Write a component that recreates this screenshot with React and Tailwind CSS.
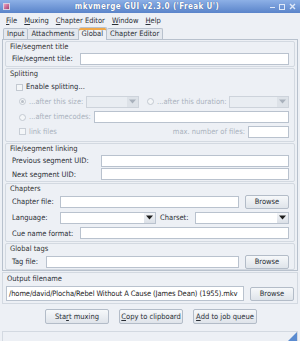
import React from "react";

const Input = ({ w, children, className = "" }) => (
  <div
    className={`h-[12px] bg-white border border-[#b9c2ce] flex items-center px-[2px] text-[#222] overflow-hidden whitespace-nowrap ${className}`}
    style={w ? { width: w } : undefined}
  >
    {children}
  </div>
);

const Btn = ({ children, className = "" }) => (
  <div
    className={`h-[14px] shrink-0 whitespace-nowrap flex items-center justify-center border border-[#b3bcc8] rounded-[2px] bg-gradient-to-b from-[#f6f8fa] to-[#dfe4ea] text-[#2a2f36] ${className}`}
  >
    {children}
  </div>
);

const Combo = ({ disabled, className = "" }) => (
  <div
    className={`h-[12px] flex border ${
      disabled ? "border-[#cdd3db] bg-[#e9edf2]" : "border-[#b9c2ce] bg-white"
    } ${className}`}
  >
    <div className="flex-1" />
    <div
      className={`w-[11px] flex items-center justify-center ${
        disabled ? "bg-[#dde2e8]" : "bg-gradient-to-b from-[#f3f5f8] to-[#dbe0e7]"
      }`}
    >
      <svg width="7" height="5" viewBox="0 0 7 5">
        <path d="M0 0.5 L7 0.5 L3.5 4.5 Z" fill={disabled ? "#a9b1bc" : "#1e1e1e"} />
      </svg>
    </div>
  </div>
);

const Group = ({ title, children, className = "" }) => (
  <div className={`border border-[#d3d9e1] rounded-[2px] px-[5px] flex flex-col ${className}`}>
    <div className="h-[10px] text-[#333] leading-[10px] -ml-[1px] whitespace-nowrap">{title}</div>
    {children}
  </div>
);

const Radio = ({ checked }) => (
  <div className="w-[7px] h-[7px] shrink-0 rounded-full border border-[#c3c9d1] bg-[#f4f6f8] flex items-center justify-center">
    {checked && <div className="w-[3px] h-[3px] rounded-full bg-[#b9bfc7]" />}
  </div>
);

const L = ({ w, children, className = "" }) => (
  <span className={`shrink-0 whitespace-nowrap ${className}`} style={w ? { width: w } : undefined}>
    {children}
  </span>
);

export default function App() {
  return (
    <div
      className="w-[300px] h-[341px] bg-[#edf0f5] flex flex-col overflow-hidden text-[7.5px] text-[#2b2f35]"
      style={{ fontFamily: '"DejaVu Sans Condensed", "DejaVu Sans", Verdana, sans-serif' }}
    >
      {/* Title bar */}
      <div className="h-[13px] bg-gradient-to-b from-[#8db0e6] to-[#5a84ca] flex items-center px-[3px] relative">
        <div className="w-[7px] h-[7px] bg-gradient-to-br from-[#f0a0c0] to-[#a04070] border border-[#d9d0e0]" />
        <div className="flex-1 text-center text-white font-bold text-[8px] tracking-[0.4px] [text-shadow:0_0_1px_#2a4a80] pl-[14px]">
          mkvmerge GUI v2.3.0 ('Freak U')
        </div>
        <div className="flex items-center gap-[4px] pr-[1px]">
          <div className="w-[5px] h-[1px] bg-[#dfe9f8] mt-[2px]" />
          <div className="w-[6px] h-[6px] border border-[#dfe9f8]" />
          <svg width="7" height="7" viewBox="0 0 7 7">
            <path d="M1 1 L6 6 M6 1 L1 6" stroke="#dfe9f8" strokeWidth="1.4" />
          </svg>
        </div>
      </div>

      {/* Menu bar */}
      <div className="h-[13px] flex items-center gap-[7px] px-[6px] text-[#2b2f35] mt-[1px] whitespace-nowrap">
        <span><u>F</u>ile</span>
        <span><u>M</u>uxing</span>
        <span><u>C</u>hapter Editor</span>
        <span><u>W</u>indow</span>
        <span><u>H</u>elp</span>
      </div>

      {/* Tabs */}
      <div className="h-[12px] flex items-end px-[3px] whitespace-nowrap">
        <div className="h-[11px] px-[3px] border border-b-0 border-[#b8c1cd] rounded-t-[2px] bg-[#e4e8ee] flex items-center">Input</div>
        <div className="h-[11px] px-[3px] border border-b-0 border-l-0 border-[#b8c1cd] rounded-t-[2px] bg-[#e4e8ee] flex items-center">Attachments</div>
        <div className="h-[13px] px-[3px] border border-b-0 border-l-0 border-[#b8c1cd] rounded-t-[2px] bg-[#edf0f5] flex items-center relative top-[1px] shadow-[inset_0_2px_0_#f0a848]">Global</div>
        <div className="h-[11px] px-[3px] border border-b-0 border-l-0 border-[#b8c1cd] rounded-t-[2px] bg-[#e4e8ee] flex items-center">Chapter Editor</div>
      </div>

      {/* Panel */}
      <div className="mx-[2px] border border-[#b8c1cd] h-[232px] px-[2px] pt-[1px] flex flex-col gap-[1px]">
        <Group title="File/segment title" className="h-[26px]">
          <div className="flex items-center h-[14px]">
            <L w="69px" className="pl-[1px]">File/segment title:</L>
            <Input className="flex-1" />
          </div>
        </Group>

        <Group title="Splitting" className="h-[75px]">
          <div className="flex items-center gap-[3px] h-[14px] mt-[1px] pl-[5px]">
            <div className="w-[7px] h-[7px] border border-[#c3c9d1] bg-[#f4f6f8]" />
            <L>Enable splitting...</L>
          </div>
          <div className="flex items-center h-[15px] pl-[8px] text-[#aab2bd]">
            <Radio checked />
            <L w="57px" className="ml-[3px]">...after this size:</L>
            <Combo disabled className="w-[53px] shrink-0" />
            <div className="ml-[8px]"><Radio /></div>
            <L w="72px" className="ml-[3px]">...after this duration:</L>
            <Combo disabled className="flex-1" />
          </div>
          <div className="flex items-center h-[16px] pl-[8px] text-[#aab2bd]">
            <Radio />
            <L w="65px" className="ml-[3px]">...after timecodes:</L>
            <Input className="flex-1" />
          </div>
          <div className="flex items-center h-[13px] pl-[8px] text-[#aab2bd]">
            <div className="w-[7px] h-[7px] border border-[#c8ced6] bg-[#f4f6f8]" />
            <span className="ml-[3px] flex-1 whitespace-nowrap">link files</span>
            <L className="mr-[3px]">max. number of files:</L>
            <Input w="41px" />
          </div>
        </Group>

        <Group title="File/segment linking" className="h-[39px]">
          <div className="flex items-center h-[14px]">
            <L w="90px" className="pl-[1px]">Previous segment UID:</L>
            <Input className="flex-1" />
          </div>
          <div className="flex items-center h-[14px]">
            <L w="90px" className="pl-[1px]">Next segment UID:</L>
            <Input className="flex-1" />
          </div>
        </Group>

        <Group title="Chapters" className="h-[60px]">
          <div className="flex items-center h-[16px]">
            <L w="49px" className="pl-[1px]">Chapter file:</L>
            <Input className="flex-1" />
            <Btn className="w-[44px] ml-[6px]">Browse</Btn>
          </div>
          <div className="flex items-center h-[16px]">
            <L w="49px" className="pl-[1px]">Language:</L>
            <Combo className="w-[96px] shrink-0" />
            <L w="35px" className="ml-[4px]">Charset:</L>
            <Combo className="flex-1" />
          </div>
          <div className="flex items-center h-[15px]">
            <L w="69px" className="pl-[1px]">Cue name format:</L>
            <Input className="flex-1" />
          </div>
        </Group>

        <Group title="Global tags" className="h-[27px]">
          <div className="flex items-center h-[15px]">
            <L w="35px" className="pl-[1px]">Tag file:</L>
            <Input className="flex-1" />
            <Btn className="w-[44px] ml-[6px]">Browse</Btn>
          </div>
        </Group>
      </div>

      {/* Output filename */}
      <div className="mx-[2px] mt-[1px] border border-[#d3d9e1] h-[32px] px-[3px] flex flex-col">
        <div className="h-[12px] leading-[12px] pl-[1px]">Output filename</div>
        <div className="flex items-center h-[17px]">
          <div className="flex-1 h-[15px] bg-white border border-[#b9c2ce] flex items-center px-[2px] whitespace-nowrap overflow-hidden text-[#222] tracking-[-0.1px]">
            /home/david/Plocha/Rebel Without A Cause (James Dean) (1955).mkv
          </div>
          <Btn className="w-[44px] ml-[6px]">Browse</Btn>
        </div>
      </div>

      {/* Action buttons */}
      <div className="flex justify-center gap-[10px] mt-[5px] h-[15px] pl-[2px]">
        <Btn className="w-[64px] h-[15px]">Sta<u>r</u>t muxing</Btn>
        <Btn className="w-[64px] h-[15px]"><u>C</u>opy to clipboard</Btn>
        <Btn className="w-[64px] h-[15px]"><u>A</u>dd to job queue</Btn>
      </div>

      {/* Status bar */}
      <div className="mt-[7px] mx-[2px] flex-1 border-t border-x border-[#d3d9e1] relative">
        <svg className="absolute right-0 bottom-0" width="9" height="9" viewBox="0 0 9 9">
          <path d="M9 0 L9 9 L0 9 Z" fill="#5b8bd0" />
        </svg>
      </div>
    </div>
  );
}
